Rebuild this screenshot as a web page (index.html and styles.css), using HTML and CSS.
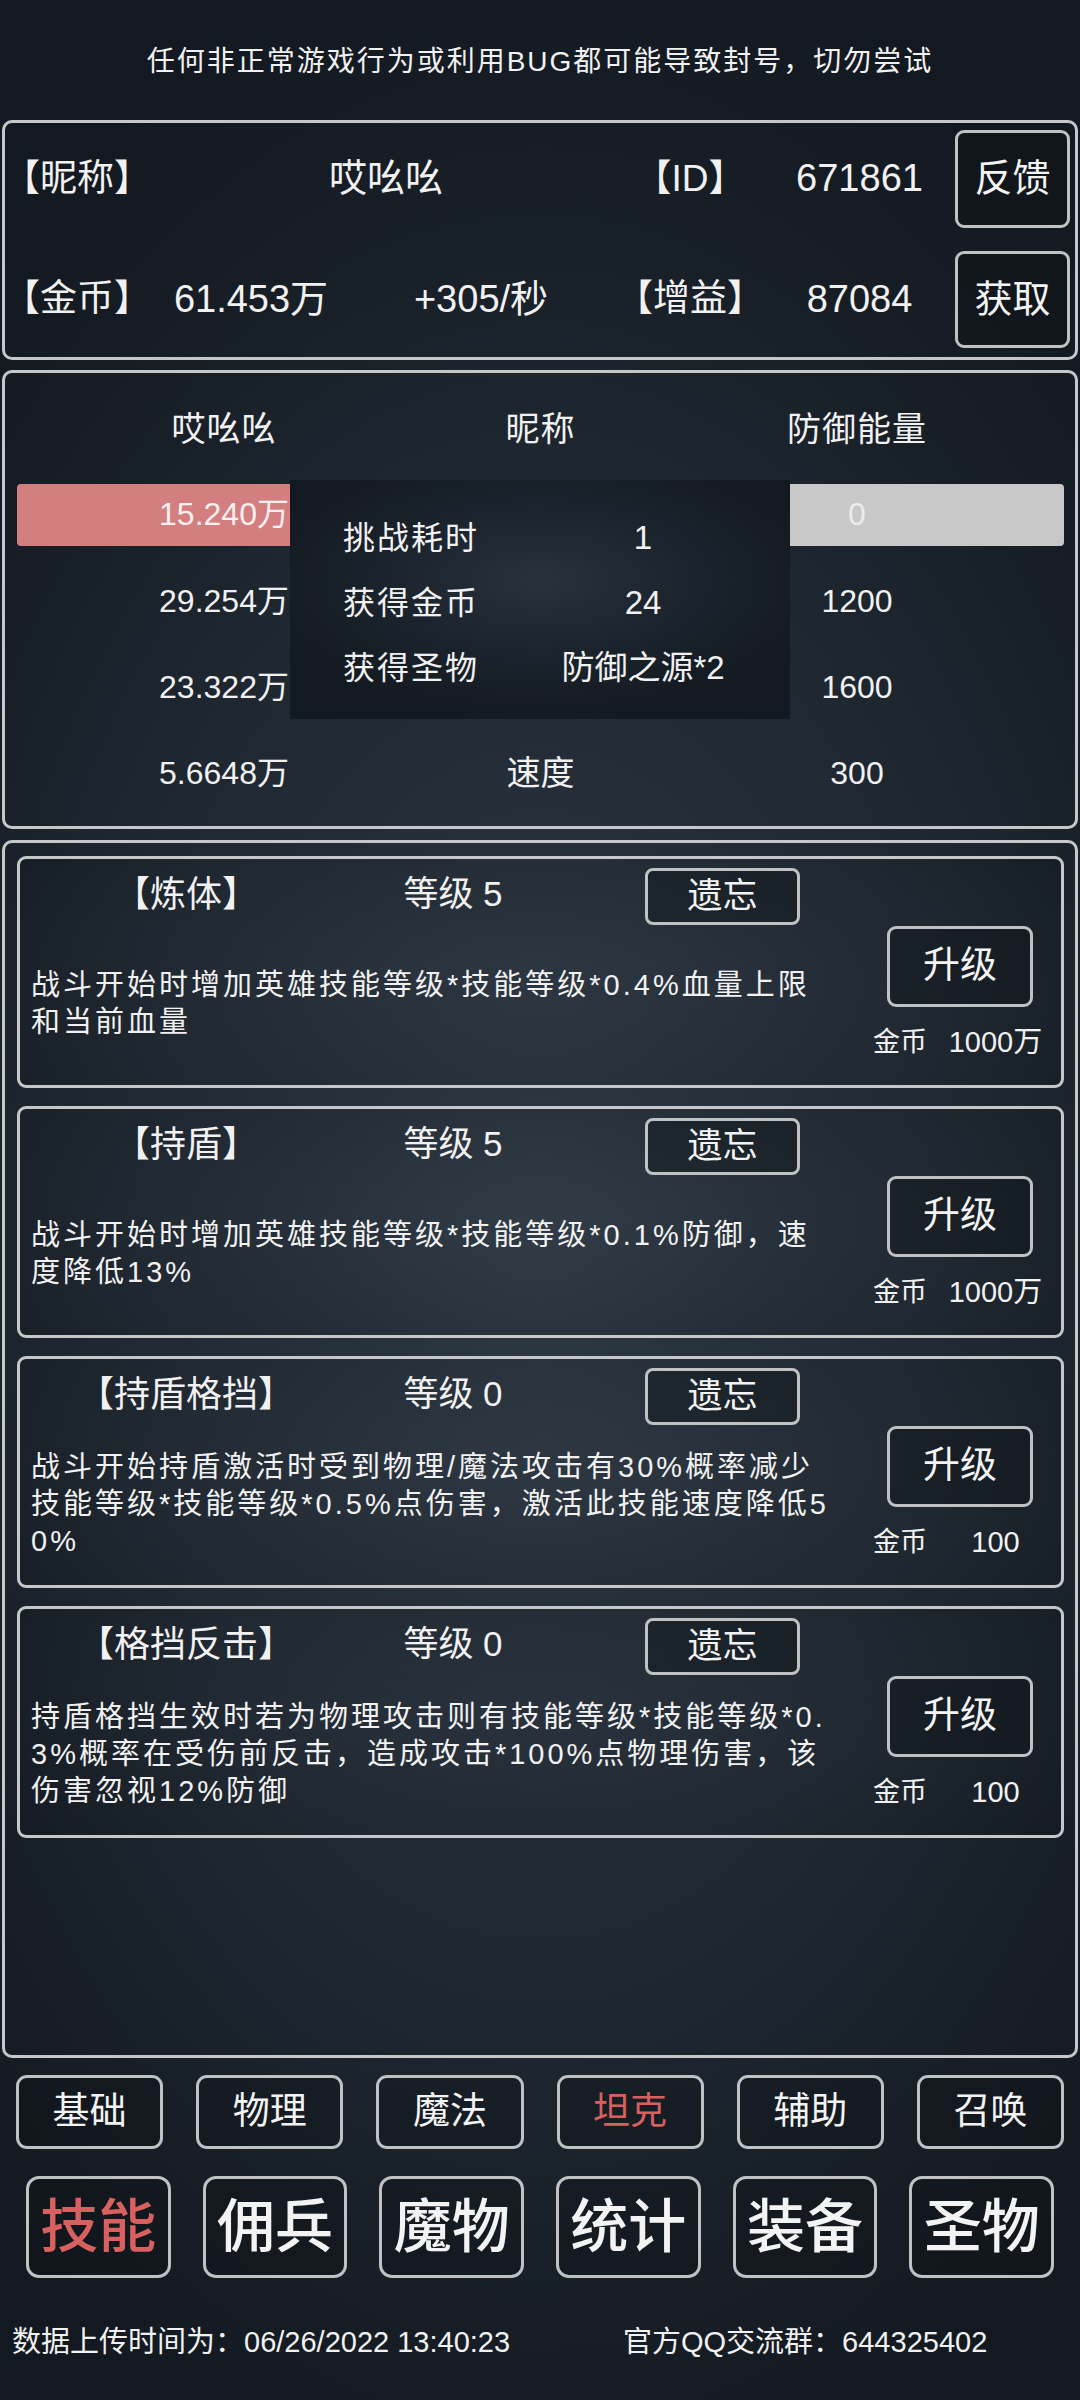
FILE: index.html
```html
<!DOCTYPE html>
<html lang="zh-CN">
<head>
<meta charset="utf-8">
<title>技能</title>
<link rel="stylesheet" href="styles.css">
</head>
<body>
<div class="screen">
  <div class="notice">任何非正常游戏行为或利用BUG都可能导致封号，切勿尝试</div>

  <section class="panel info">
    <div class="lab">【昵称】</div>
    <div class="val wide">哎吆吆</div>
    <div class="val">【ID】</div>
    <div class="val num">671861</div>
    <div class="btn side-btn">反馈</div>

    <div class="lab">【金币】</div>
    <div class="val num">61.453万</div>
    <div class="val num">+305/秒</div>
    <div class="val">【增益】</div>
    <div class="val num">87084</div>
    <div class="btn side-btn">获取</div>
  </section>

  <section class="panel battle">
    <div class="table">
      <div class="th">哎吆吆</div>
      <div class="th">昵称</div>
      <div class="th">防御能量</div>

      <div class="bar">
        <div class="td hp">15.240万</div>
        <div class="td"></div>
        <div class="td shield">0</div>
      </div>

      <div class="td">29.254万</div>
      <div class="td"></div>
      <div class="td">1200</div>

      <div class="td">23.322万</div>
      <div class="td"></div>
      <div class="td">1600</div>

      <div class="td">5.6648万</div>
      <div class="td cjk">速度</div>
      <div class="td">300</div>
    </div>

    <div class="popup">
      <div class="p-lab">挑战耗时</div><div class="p-val">1</div>
      <div class="p-lab">获得金币</div><div class="p-val">24</div>
      <div class="p-lab">获得圣物</div><div class="p-val">防御之源*2</div>
    </div>
  </section>

  <section class="panel skills">
    <div class="card">
      <div class="card-main">
        <div class="card-head">
          <div class="title">【炼体】</div>
          <div class="level">等级 5</div>
          <div class="head-end"><div class="btn forget">遗忘</div></div>
        </div>
        <div class="desc"><p>战斗开始时增加英雄技能等级*技能等级*0.4%血量上限<br>和当前血量</p></div>
      </div>
      <div class="card-side">
        <div class="btn upgrade">升级</div>
        <div class="cost"><span class="cost-lab">金币</span><span class="cost-val">1000万</span></div>
      </div>
    </div>

    <div class="card">
      <div class="card-main">
        <div class="card-head">
          <div class="title">【持盾】</div>
          <div class="level">等级 5</div>
          <div class="head-end"><div class="btn forget">遗忘</div></div>
        </div>
        <div class="desc"><p>战斗开始时增加英雄技能等级*技能等级*0.1%防御，速<br>度降低13%</p></div>
      </div>
      <div class="card-side">
        <div class="btn upgrade">升级</div>
        <div class="cost"><span class="cost-lab">金币</span><span class="cost-val">1000万</span></div>
      </div>
    </div>

    <div class="card">
      <div class="card-main">
        <div class="card-head">
          <div class="title">【持盾格挡】</div>
          <div class="level">等级 0</div>
          <div class="head-end"><div class="btn forget">遗忘</div></div>
        </div>
        <div class="desc"><p>战斗开始持盾激活时受到物理/魔法攻击有30%概率减少<br>技能等级*技能等级*0.5%点伤害，激活此技能速度降低5<br>0%</p></div>
      </div>
      <div class="card-side">
        <div class="btn upgrade">升级</div>
        <div class="cost"><span class="cost-lab">金币</span><span class="cost-val">100</span></div>
      </div>
    </div>

    <div class="card">
      <div class="card-main">
        <div class="card-head">
          <div class="title">【格挡反击】</div>
          <div class="level">等级 0</div>
          <div class="head-end"><div class="btn forget">遗忘</div></div>
        </div>
        <div class="desc"><p>持盾格挡生效时若为物理攻击则有技能等级*技能等级*0.<br>3%概率在受伤前反击，造成攻击*100%点物理伤害，该<br>伤害忽视12%防御</p></div>
      </div>
      <div class="card-side">
        <div class="btn upgrade">升级</div>
        <div class="cost"><span class="cost-lab">金币</span><span class="cost-val">100</span></div>
      </div>
    </div>
  </section>

  <nav class="subtabs">
    <div class="tab">基础</div>
    <div class="tab">物理</div>
    <div class="tab">魔法</div>
    <div class="tab active">坦克</div>
    <div class="tab">辅助</div>
    <div class="tab">召唤</div>
  </nav>

  <nav class="maintabs">
    <div class="tab big active">技能</div>
    <div class="tab big">佣兵</div>
    <div class="tab big">魔物</div>
    <div class="tab big">统计</div>
    <div class="tab big">装备</div>
    <div class="tab big">圣物</div>
  </nav>

  <footer class="footer">
    <div>数据上传时间为：06/26/2022 13:40:23</div>
    <div>官方QQ交流群：644325402</div>
  </footer>
</div>
</body>
</html>
```

FILE: styles.css
```css
* { box-sizing: border-box; }

html, body {
  margin: 0;
  padding: 0;
}

body {
  width: 1080px;
  height: 2400px;
  overflow: hidden;
  color: #f1f1f1;
  font-family: "Liberation Sans", "Noto Sans CJK SC", sans-serif;
  line-height: 1.1;
  background:
    radial-gradient(ellipse 75% 55% at 50% 52%, #2d3843 0%, #222b35 45%, #171e26 80%, #131920 100%);
}

.screen {
  width: 1080px;
  height: 2400px;
  display: flex;
  flex-direction: column;
}

.notice {
  height: 120px;
  display: flex;
  align-items: center;
  justify-content: center;
  padding-top: 4px;
  font-size: 28px;
  letter-spacing: 2px;
}

.panel {
  margin: 0 2px;
  border: 3px solid #c5c7c9;
  border-radius: 10px;
}

/* ---------- info panel ---------- */
.info {
  height: 240px;
  display: grid;
  grid-template-columns: 150px 190px 270px 148px 191px 115px;
  grid-template-rows: 98px 97px;
  row-gap: 23px;
  padding: 7px 5px 9px 1px;
  align-items: center;
}

.lab {
  font-size: 37px;
  text-align: left;
  margin-left: -3px;
}

.val {
  font-size: 37px;
  text-align: center;
}

.val.wide {
  grid-column: span 2;
  font-size: 38px;
}

.num {
  font-size: 38px;
}

.btn {
  display: flex;
  align-items: center;
  justify-content: center;
  border: 3px solid #bfc1c3;
  border-radius: 9px;
  background: rgba(12, 16, 21, 0.35);
  color: #f3f3f3;
}

.side-btn {
  height: 100%;
  font-size: 38px;
}

/* ---------- battle panel ---------- */
.battle {
  position: relative;
  margin-top: 10px;
  height: 459px;
  padding: 14px 11px 9px 12px;
}

.table {
  display: grid;
  grid-template-columns: 414px 219px 414px;
  grid-auto-rows: 86px;
  align-items: center;
  justify-items: center;
}

.th {
  font-size: 34px;
  letter-spacing: 1px;
}

.td {
  font-size: 32px;
}

.td.cjk {
  font-size: 34px;
}

.bar {
  grid-column: 1 / -1;
  width: 100%;
  height: 62px;
  margin-top: -3px;
  display: grid;
  grid-template-columns: 414px 219px 414px;
  align-items: center;
  justify-items: center;
  border-radius: 4px;
  background: linear-gradient(to right, #d37e7f 0, #d37e7f 50%, #c8c8c8 50%, #c8c8c8 100%);
}

.hp { color: #fbefef; }
.shield { color: #ececec; }

.popup {
  position: absolute;
  left: 285px;
  top: 107px;
  width: 500px;
  height: 239px;
  padding: 26px 0 0 53px;
  display: grid;
  grid-template-columns: 187px 226px;
  grid-auto-rows: 65px;
  align-items: center;
  background: radial-gradient(ellipse 60% 60% at 50% 42%, #28323d 0%, #1a222b 55%, #131920 100%);
}

.p-lab {
  font-size: 32px;
  letter-spacing: 2px;
}

.p-val {
  font-size: 33px;
  text-align: center;
}

/* ---------- skills panel ---------- */
.skills {
  margin-top: 11px;
  height: 1218px;
  padding: 13px 11px 0 12px;
  display: flex;
  flex-direction: column;
  gap: 18px;
}

.card {
  height: 232px;
  flex: none;
  display: flex;
  border: 3px solid #c5c7c9;
  border-radius: 9px;
  background: radial-gradient(ellipse 70% 80% at 50% 50%, rgba(255,255,255,0.02), rgba(0,0,0,0.12));
}

.card-main {
  flex: 1;
  display: flex;
  flex-direction: column;
}

.card-head {
  height: 74px;
  padding-bottom: 3px;
  display: grid;
  grid-template-columns: 332px 202px 246px;
  align-items: center;
}

.title {
  text-align: center;
  font-size: 36px;
}

.level {
  text-align: center;
  font-size: 35px;
}

.head-end {
  display: flex;
  justify-content: flex-end;
  margin-top: 3px;
}

.forget {
  width: 155px;
  height: 57px;
  font-size: 35px;
  border-radius: 8px;
}

.desc {
  flex: 1;
  display: flex;
  align-items: center;
  padding: 0 0 10px 11px;
}

.desc p {
  margin: 0;
  font-size: 29px;
  line-height: 37px;
  letter-spacing: 3px;
  white-space: nowrap;
}

.card-side {
  width: 191px;
  flex: none;
  display: flex;
  flex-direction: column;
}

.upgrade {
  width: 146px;
  height: 81px;
  margin: 67px 0 0 17px;
  font-size: 37px;
}

.cost {
  margin-top: 18px;
  height: 36px;
  padding-left: 3px;
  display: grid;
  grid-template-columns: 57px 1fr;
  align-items: center;
}

.cost-lab {
  font-size: 27px;
}

.cost-val {
  font-size: 29px;
  text-align: center;
}

/* ---------- tabs ---------- */
.subtabs {
  margin-top: 17px;
  height: 74px;
  padding: 0 16px;
  display: grid;
  grid-template-columns: repeat(6, 1fr);
  gap: 33px;
}

.maintabs {
  margin-top: 27px;
  height: 102px;
  padding: 0 26px;
  display: grid;
  grid-template-columns: repeat(6, 1fr);
  gap: 32px;
}

.tab {
  display: flex;
  align-items: center;
  justify-content: center;
  border: 3px solid #bfc1c3;
  border-radius: 11px;
  font-size: 37px;
  color: #f3f3f3;
  background: rgba(12, 16, 21, 0.3);
}

.tab.big {
  border-radius: 13px;
  font-size: 58px;
  font-weight: 500;
}

.tab.active {
  color: #d8605f;
}

/* ---------- footer ---------- */
.footer {
  margin-top: 44px;
  height: 40px;
  padding-left: 12px;
  display: grid;
  grid-template-columns: 611px 1fr;
  align-items: center;
  font-size: 29px;
  line-height: 40px;
  white-space: nowrap;
}
```
